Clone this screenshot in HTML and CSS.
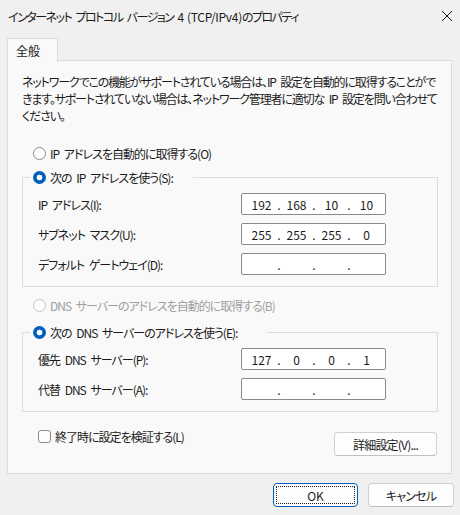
FILE: index.html
```html
<!DOCTYPE html>
<html lang="ja">
<head>
<meta charset="utf-8">
<link rel="stylesheet" href="styles.css">
</head>
<body>
<div class="window">
  <div class="titlebar">
    <span class="title">インターネット プロトコル バージョン 4 <span class="lat">(TCP/IPv4)</span>のプロパティ</span>
    <svg class="close" width="12" height="12" viewBox="0 0 12 12"><path d="M1 1 L11 11 M11 1 L1 11" stroke="#1b1b1b" stroke-width="1" fill="none"/></svg>
  </div>
  <div class="tabs"><div class="tab">全般</div></div>
  <div class="panel">
    <p class="desc">ネットワークでこの機能がサポートされている場合は、IP 設定を自動的に取得することがで<br>きます。サポートされていない場合は、ネットワーク管理者に適切な IP 設定を問い合わせて<br>ください。</p>

    <div class="radio-row first"><span class="radio"></span><span>IP アドレスを自動的に取得する(O)</span></div>
    <fieldset class="group g1">
      <legend class="radio-row legend-ip"><span class="radio checked"></span><span>次の IP アドレスを使う(S):</span></legend>
      <div class="field-row"><span class="label">IP アドレス(I):</span><div class="ip"><span class="seg">192</span><span class="dot">.</span><span class="seg">168</span><span class="dot">.</span><span class="seg">10</span><span class="dot">.</span><span class="seg">10</span></div></div>
      <div class="field-row"><span class="label">サブネット マスク(U):</span><div class="ip"><span class="seg">255</span><span class="dot">.</span><span class="seg">255</span><span class="dot">.</span><span class="seg">255</span><span class="dot">.</span><span class="seg">0</span></div></div>
      <div class="field-row"><span class="label">デフォルト ゲートウェイ(D):</span><div class="ip"><span class="seg"></span><span class="dot">.</span><span class="seg"></span><span class="dot">.</span><span class="seg"></span><span class="dot">.</span><span class="seg"></span></div></div>
    </fieldset>

    <div class="radio-row disabled dns-auto"><span class="radio"></span><span>DNS サーバーのアドレスを自動的に取得する(B)</span></div>
    <fieldset class="group g2">
      <legend class="radio-row legend-dns"><span class="radio checked"></span><span>次の DNS サーバーのアドレスを使う(E):</span></legend>
      <div class="field-row"><span class="label">優先 DNS サーバー(P):</span><div class="ip"><span class="seg">127</span><span class="dot">.</span><span class="seg">0</span><span class="dot">.</span><span class="seg">0</span><span class="dot">.</span><span class="seg">1</span></div></div>
      <div class="field-row"><span class="label">代替 DNS サーバー(A):</span><div class="ip"><span class="seg"></span><span class="dot">.</span><span class="seg"></span><span class="dot">.</span><span class="seg"></span><span class="dot">.</span><span class="seg"></span></div></div>
    </fieldset>

    <div class="bottom-row">
      <label class="check-row"><span class="checkbox"></span><span>終了時に設定を検証する(L)</span></label>
      <button class="btn advanced">詳細設定(V)...</button>
    </div>
  </div>
  <div class="footer">
    <button class="btn ok">OK</button>
    <button class="btn cancel">キャンセル</button>
  </div>
</div>
</body>
</html>
```
FILE: styles.css
```css
* { box-sizing: border-box; }
html, body { margin: 0; padding: 0; }
body {
  background: #f0f0f0;
  font-family: "Noto Sans CJK JP", "Noto Sans", sans-serif;
  font-size: 12px;
  line-height: 17px;
  letter-spacing: -1px;
  word-spacing: 3px;
  color: #1b1b1b;
  font-feature-settings: "palt";
  width: 460px;
  height: 515px;
  overflow: hidden;
}
.window { width: 460px; height: 515px; }
.titlebar {
  height: 32px;
  display: flex;
  align-items: center;
  justify-content: space-between;
  padding: 0 7px 0 8px;
}
.title { font-size: 12px; letter-spacing: -1.5px; white-space: nowrap; }
.title .lat { letter-spacing: -0.3px; }
.close { display: block; }
.tabs { padding: 6px 0 0 7px; height: 29px; }
.tab {
  width: 51px;
  height: 24px;
  background: #f9f9f9;
  border: 1px solid #dcdcdc;
  border-bottom: none;
  padding: 3px 0 0 8px;
  letter-spacing: 0;
  position: relative;
  z-index: 1;
}
.panel {
  margin: -1px 8px 0 7px;
  height: 414px;
  background: #f9f9f9;
  border: 1px solid #dcdcdc;
  padding: 0 13px 0 14px;
}
.desc { margin: 12px 0 0 0; white-space: nowrap; letter-spacing: -1.15px; }
.radio-row {
  display: flex;
  align-items: center;
  gap: 4px;
  height: 17px;
  padding-left: 11px;
  white-space: nowrap;
}
.radio-row.first { margin-top: 21px; }
.radio {
  width: 13px;
  height: 13px;
  border-radius: 50%;
  border: 1px solid #8a8a8a;
  background: #fdfdfd;
  flex: none;
}
.radio.checked {
  border: none;
  background: radial-gradient(circle, #ffffff 0 2.6px, #005fb8 3.2px);
}
.disabled { color: #a0a0a0; }
.disabled .radio { border-color: #c4c4c4; }
.group {
  margin: 7px 0 0 0;
  border: 1px solid #dcdcdc;
  padding: 7px 15px 11px 15px;
  min-width: 0;
}
.group legend.radio-row {
  margin-left: -8px;
  padding: 0 20px 0 3px;
}
.group legend.legend-dns { padding-right: 30px; }
.field-row {
  display: flex;
  align-items: center;
  height: 22px;
  white-space: nowrap;
}
.field-row + .field-row { margin-top: 8px; }
.label { width: 203px; flex: none; }
.ip {
  width: 145px;
  height: 22px;
  border: 1px solid #8a8a8a;
  border-radius: 2px;
  background: #ffffff;
  display: flex;
  align-items: center;
  padding-left: 6px;
  letter-spacing: 0;
}
.seg { width: 27px; text-align: center; }
.dot { width: 8px; text-align: center; }
.dns-auto { margin-top: 10px; }
.g2 { margin-top: 10px; }
.bottom-row {
  display: flex;
  justify-content: space-between;
  align-items: flex-start;
  margin-top: 20px;
  padding-left: 16px;
  padding-right: 1px;
}
.check-row { display: flex; align-items: center; gap: 4px; margin-top: -4px; white-space: nowrap; }
.checkbox {
  width: 13px;
  height: 13px;
  border: 1px solid #8a8a8a;
  border-radius: 3px;
  background: #fdfdfd;
}
.btn {
  font: inherit;
  font-feature-settings: "palt";
  letter-spacing: -0.8px;
  color: #1b1b1b;
  background: #fdfdfd;
  border: 1px solid #d0d0d0;
  border-bottom-color: #c0c0c0;
  border-radius: 4px;
  height: 24px;
  padding: 0;
  position: relative;
}
.advanced { width: 103px; }
.footer {
  display: flex;
  justify-content: flex-end;
  gap: 10px;
  padding: 9px 6px 0 0;
}
.ok { width: 85px; border: 1px solid #005fb8; letter-spacing: 0; }
.ok::after {
  content: "";
  position: absolute;
  inset: 2px;
  border: 1px dotted #1b1b1b;
  border-radius: 1px;
}
.cancel { width: 86px; }
```
